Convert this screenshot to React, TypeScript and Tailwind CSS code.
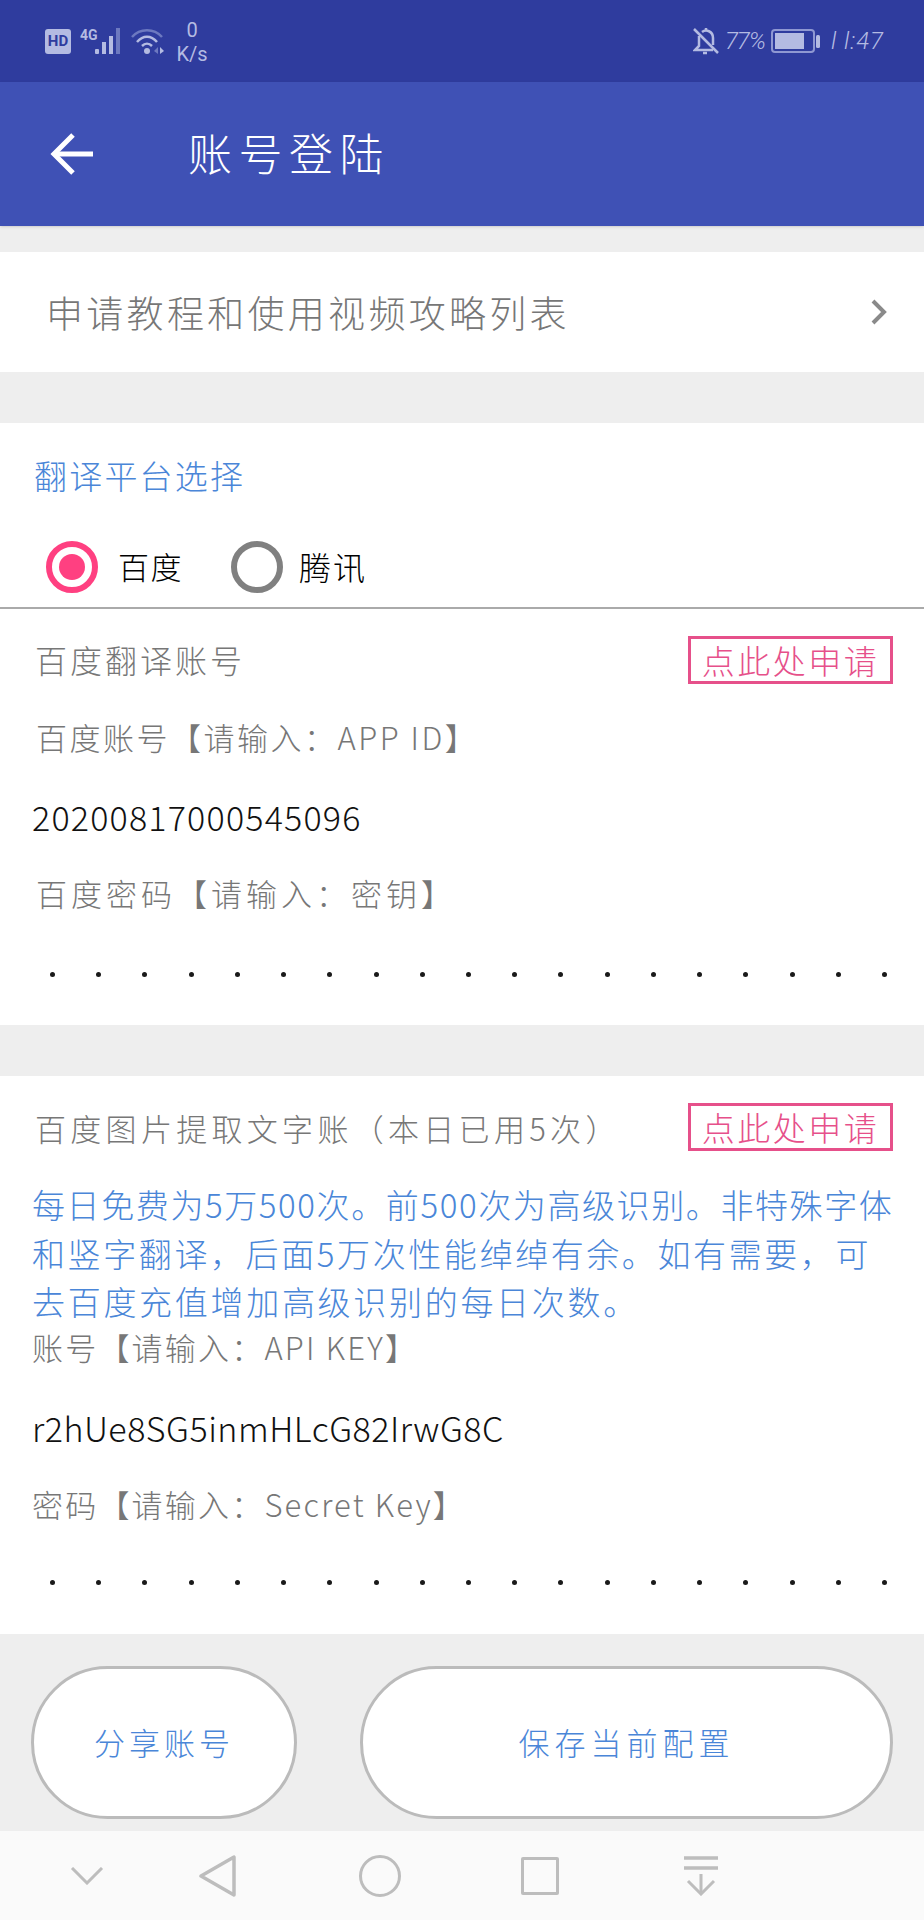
import React from "react";

const cjk = { fontFamily: '"Noto Sans CJK SC", "Noto Sans", sans-serif' };

const Dots: React.FC = () => (
  <div className="flex justify-between pl-[50px] pr-[37px]">
    {Array.from({ length: 19 }).map((_, i) => (
      <span key={i} className="w-[5px] h-[5px] rounded-full bg-[#1a1a1a]" />
    ))}
  </div>
);

const ApplyButton: React.FC = () => (
  <div className="w-[205px] h-[48px] border-[3px] border-[#e6508a] flex items-center justify-center text-[33px] leading-none tracking-[2.5px] font-light text-[#e6508a]">
    点此处申请
  </div>
);

const StatusBar: React.FC = () => (
  <div className="h-[82px] bg-[#2f3c9e] flex items-start text-[#b4bbe2]" style={{ fontFamily: "Roboto, sans-serif" }}>
    <div className="ml-[45px] mt-[29px] w-[26px] h-[25px] rounded-[3px] bg-[#b4bbe2] text-[#2f3c9e] text-[15px] font-bold leading-[25px] text-center">
      HD
    </div>
    {/* 4G + signal */}
    <svg className="ml-[9px] mt-[27px]" width="44" height="28" viewBox="0 0 44 28">
      <text x="0" y="13" fontSize="14" fontWeight="700" fill="#b4bbe2" fontFamily="Roboto, sans-serif">4G</text>
      <rect x="15" y="22" width="4" height="5" rx="1" fill="#b4bbe2" />
      <rect x="22" y="15" width="4" height="12" fill="#b4bbe2" />
      <rect x="29" y="9" width="4" height="18" fill="#b4bbe2" />
      <rect x="36" y="1" width="4" height="26" fill="#6d79c0" />
    </svg>
    {/* wifi */}
    <svg className="ml-[7px] mt-[27px]" width="34" height="28" viewBox="0 0 34 28" fill="none">
      <path d="M1 10 C9 1 23 1 31 10" stroke="#6d79c0" strokeWidth="2.5" />
      <path d="M6 15 C12 8 20 8 26 15" stroke="#b4bbe2" strokeWidth="2.5" />
      <path d="M11 19 C14 16 18 16 21 19" stroke="#b4bbe2" strokeWidth="2.5" />
      <circle cx="16" cy="24" r="3" fill="#b4bbe2" />
      <path d="M27 20 L23 24 L27 27 Z" fill="#6d79c0" />
      <path d="M29 20 L33 24 L29 27 Z" fill="#b4bbe2" />
    </svg>
    <div className="ml-[10px] mt-[18px] w-[34px] text-center text-[20px] leading-[24px]">
      <div>0</div>
      <div>K/s</div>
    </div>
    <div className="ml-auto mr-[40px] mt-[27px] flex items-center h-[28px]">
      <svg width="26" height="28" viewBox="0 0 26 28" fill="none" stroke="#b4bbe2" strokeWidth="2.5">
        <path d="M6 9 V19 L2 23 H20" />
        <path d="M9 5 C13 2 20 4 20 11 V18" />
        <path d="M10 26 H14" />
        <path d="M13 1 V3" />
        <path d="M1 2 L25 26" />
      </svg>
      <span className="ml-[6px] text-[24px] font-light italic w-[40px] tracking-[-1px]">77%</span>
      <svg className="ml-[6px]" width="50" height="24" viewBox="0 0 50 24" fill="none">
        <rect x="1" y="1" width="42" height="22" rx="3" stroke="#8f98d2" strokeWidth="2" />
        <rect x="4" y="4" width="29" height="16" fill="#b4bbe2" />
        <rect x="45" y="6" width="4" height="13" rx="1.5" fill="#b4bbe2" />
      </svg>
      <span className="ml-[10px] text-[24px] font-light italic tracking-[1px]">l l:47</span>
    </div>
  </div>
);

const NavBar: React.FC = () => (
  <div className="h-[89px] bg-[#fafafa] flex items-center pl-[67px]">
    <div className="w-[40px] flex justify-center">
      <svg width="34" height="18" viewBox="0 0 34 18" fill="none" stroke="#bdbdbd" strokeWidth="3">
        <path d="M2 1 L17 16 L32 1" />
      </svg>
    </div>
    <div className="w-[40px] ml-[91px] flex justify-center">
      <svg width="38" height="42" viewBox="0 0 38 42" fill="none" stroke="#bdbdbd" strokeWidth="3.5" strokeLinejoin="round">
        <path d="M35 2 V40 L2 21 Z" />
      </svg>
    </div>
    <div className="w-[42px] ml-[121px] flex justify-center">
      <div className="w-[42px] h-[42px] rounded-full border-[3.5px] border-[#bdbdbd]" />
    </div>
    <div className="w-[38px] ml-[120px] flex justify-center">
      <div className="w-[38px] h-[38px] rounded-[2px] border-[3.5px] border-[#bdbdbd]" />
    </div>
    <div className="w-[36px] ml-[124px] flex justify-center">
      <svg width="36" height="40" viewBox="0 0 36 40" fill="none" stroke="#bdbdbd" strokeWidth="3">
        <path d="M1 2 H35" strokeWidth="3.5" />
        <path d="M1 12 H35" strokeWidth="3.5" />
        <path d="M18 18 V38" />
        <path d="M5 25 L18 38 L31 25" />
      </svg>
    </div>
  </div>
);

export default function App() {
  return (
    <div className="w-[924px] h-[1920px] flex flex-col bg-[#eeeeee] overflow-hidden" style={cjk}>
      <StatusBar />

      {/* Header */}
      <div className="h-[144px] bg-[#3f51b5] shadow-sm flex items-center">
        <svg className="ml-[50px]" width="44" height="44" viewBox="0 0 44 44" fill="none" stroke="#ffffff" strokeWidth="5">
          <path d="M43 22 H5" />
          <path d="M23 3 L4 22 L23 41" />
        </svg>
        <span className="ml-[94px] pb-[4px] text-[44px] leading-none tracking-[6.5px] font-light text-white">账号登陆</span>
      </div>

      {/* Tutorial list row */}
      <div className="mt-[26px] h-[120px] bg-white flex items-center justify-between pl-[46px] pr-[36px]">
        <span className="text-[37px] leading-none tracking-[3.3px] font-light text-[#777777]">申请教程和使用视频攻略列表</span>
        <svg width="18" height="28" viewBox="0 0 18 28" fill="none" stroke="#8a8a8a" strokeWidth="4">
          <path d="M3 3 L14 14 L3 25" />
        </svg>
      </div>

      {/* Baidu translate card */}
      <div className="mt-[51px] h-[602px] bg-white">
        <div className="h-[104px] pl-[34px] flex items-center text-[33px] leading-none tracking-[2.2px] font-light text-[#4a86d8]">
          翻译平台选择
        </div>
        <div className="h-[82px] border-b-2 border-[#aaaaaa] flex items-start pt-[14px] pl-[46px]">
          <div className="w-[52px] h-[52px] rounded-full border-[6px] border-[#ff4081] flex items-center justify-center">
            <div className="w-[26px] h-[26px] rounded-full bg-[#ff4081]" />
          </div>
          <span className="ml-[20px] h-[52px] leading-[50px] text-[31px] tracking-[1.5px] font-light text-black">百度</span>
          <div className="ml-[48px] w-[52px] h-[52px] rounded-full border-[6px] border-[#808080]" />
          <span className="ml-[16px] h-[52px] leading-[50px] text-[32px] tracking-[2px] font-light text-black">腾讯</span>
        </div>

        <div className="pt-[27px] pb-[24px] pl-[35px] pr-[31px] flex items-center justify-between">
          <span className="pb-[2px] text-[32px] leading-none tracking-[3px] font-light text-[#777777]">百度翻译账号</span>
          <ApplyButton />
        </div>
        <div className="h-[60px] pl-[36px] pb-[4px] flex items-center text-[31px] leading-none tracking-[2.5px] font-light text-[#777777]">
          百度账号【请输入：APP ID】
        </div>
        <div className="h-[102px] pl-[32px] pb-[4px] flex items-center text-[34px] leading-none tracking-[1.2px] font-light text-[#111111]">
          20200817000545096
        </div>
        <div className="h-[48px] pl-[36px] pb-[4px] flex items-center text-[31px] leading-none tracking-[4px] font-light text-[#777777]">
          百度密码【请输入：密钥】
        </div>
        <div className="pt-[54px]">
          <Dots />
        </div>
      </div>

      {/* Baidu OCR card */}
      <div className="mt-[51px] h-[558px] bg-white">
        <div className="pt-[27px] pl-[35px] pr-[31px] flex items-center justify-between">
          <span className="text-[31px] leading-none tracking-[4.3px] font-light text-[#777777]">百度图片提取文字账（本日已用5次）</span>
          <ApplyButton />
        </div>
        <div className="mt-[29px] pl-[32px] pr-[30px] text-[33px] leading-[48.5px] font-light text-[#4a86d8]">
          <div className="whitespace-nowrap tracking-[1.6px]">每日免费为5万500次。前500次为高级识别。非特殊字体</div>
          <div className="whitespace-nowrap tracking-[2.6px]">和竖字翻译，后面5万次性能绰绰有余。如有需要，可</div>
          <div className="whitespace-nowrap tracking-[2.7px]">去百度充值增加高级识别的每日次数。</div>
        </div>
        <div className="h-[44px] pl-[32px] pb-[3px] flex items-center text-[31px] leading-none tracking-[2.2px] font-light text-[#777777]">
          账号【请输入：API KEY】
        </div>
        <div className="h-[120px] pl-[32px] pb-[4px] flex items-center text-[34px] leading-none tracking-[0.5px] font-light text-[#111111]">
          r2hUe8SG5inmHLcG82IrwG8C
        </div>
        <div className="h-[30px] pl-[32px] pb-[3px] flex items-center text-[31px] leading-none tracking-[2.2px] font-light text-[#777777]">
          密码【请输入：Secret Key】
        </div>
        <div className="pt-[60px]">
          <Dots />
        </div>
      </div>

      {/* Action buttons */}
      <div className="flex-1 pt-[32px] pl-[31px] pr-[31px] flex items-start gap-[63px]">
        <div className="w-[266px] h-[153px] rounded-full border-[3px] border-[#bbbbbb] bg-white flex items-center justify-center pb-[2px] text-[31px] leading-none tracking-[4px] font-light text-[#4a86d8]">
          分享账号
        </div>
        <div className="flex-1 h-[153px] rounded-full border-[3px] border-[#bbbbbb] bg-white flex items-center justify-center pb-[2px] text-[31px] leading-none tracking-[5px] font-light text-[#4a86d8]">
          保存当前配置
        </div>
      </div>

      <NavBar />
    </div>
  );
}
